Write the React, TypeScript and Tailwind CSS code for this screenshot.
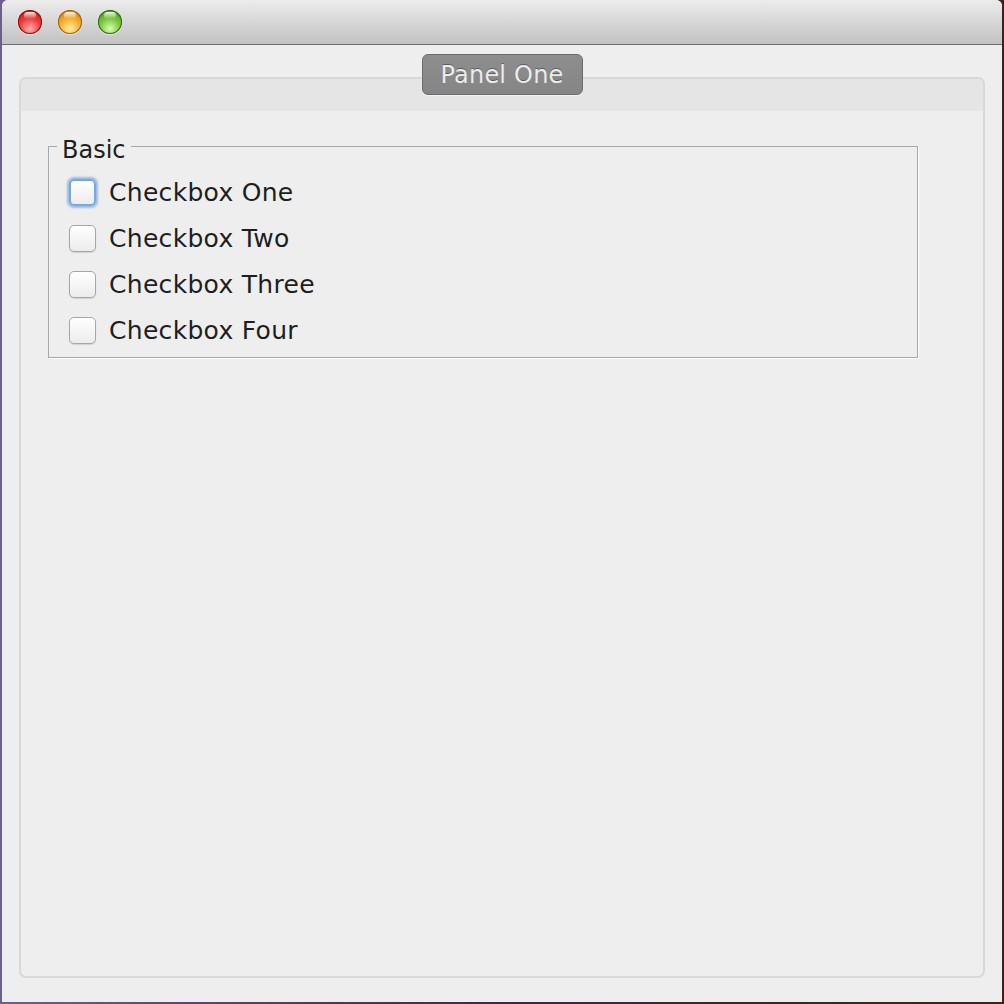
import React from "react";

function Light({ from, mid, to, ring }: { from: string; mid: string; to: string; ring: string }) {
  return (
    <div
      className="w-[24px] h-[24px] rounded-full relative"
      style={{
        background: `radial-gradient(circle at 50% 78%, ${from} 0%, ${mid} 45%, ${to} 100%)`,
        boxShadow: `inset 0 0 0 1px ${ring}, 0 1px 1px rgba(255,255,255,0.6)`,
      }}
    >
      <div className="absolute left-[6px] top-[2px] w-[12px] h-[7px] rounded-full bg-gradient-to-b from-white/90 to-white/0" />
    </div>
  );
}

function Check({ label, focused }: { label: string; focused?: boolean }) {
  return (
    <div className="flex items-center h-[46px]">
      <div
        className={
          "w-[27px] h-[27px] rounded-[5px] bg-gradient-to-b from-[#ffffff] to-[#ececec] " +
          (focused
            ? "border-2 border-[#78a8e0] shadow-[0_0_2px_2px_rgba(120,168,224,0.7)]"
            : "border border-[#a6a6a6] shadow-[0_1px_1px_rgba(0,0,0,0.12)]")
        }
      />
      <span className="ml-[13px] text-[25px] leading-none tracking-[0.3px] text-[#1e1e1e]">{label}</span>
    </div>
  );
}

export default function App() {
  return (
    <div
      className="w-[1004px] h-[1004px] flex px-[2px] pb-[2px] bg-gradient-to-r from-[#6d5e8e] via-[#3a2a40] to-[#3b2412]"
      style={{ fontFamily: '"DejaVu Sans", "Liberation Sans", sans-serif' }}
    >
      <div className="flex-1 flex flex-col bg-[#eeeeee] rounded-t-[6px] overflow-hidden">
        <div className="h-[45px] shrink-0 bg-gradient-to-b from-[#ececec] to-[#c2c2c2] border-b border-[#6e6e6e] flex items-center pl-[16px] gap-[16px] pb-[1px]">
          <Light from="#ffb0b0" mid="#f04040" to="#b01010" ring="#8a1010" />
          <Light from="#fff0a0" mid="#f6b030" to="#c07010" ring="#9a6010" />
          <Light from="#d8ffb0" mid="#7cc840" to="#3a8a10" ring="#2f6a10" />
        </div>
        <div className="flex-1 flex flex-col pt-[9px] px-[17px] pb-[24px]">
          <div className="flex justify-center relative z-10">
            <div className="w-[161px] h-[41px] rounded-[6px] bg-gradient-to-b from-[#8e8e8e] to-[#858585] border border-[#6c6c6c] shadow-[0_1px_1px_rgba(255,255,255,0.6)] flex items-center justify-center text-[24px] tracking-[0.2px] text-[#ececec] [text-shadow:0_-1px_0_rgba(0,0,0,0.35)]">
              Panel One
            </div>
          </div>
          <div className="flex-1 -mt-[18px] border-2 border-[#d8d8d8] rounded-[7px] flex flex-col overflow-hidden">
            <div className="h-[32px] bg-[#e5e5e5] shrink-0" />
            <div className="pl-[27px] pt-[22px]">
              <fieldset className="w-[870px] border border-[#a8a8a8] shadow-[1px_1px_0_#ffffff] pl-[20px] pb-[4px]">
                <legend className="ml-[-12px] px-[5px] text-[24px] leading-[26px] text-[#1e1e1e]">
                  <span className="relative top-[4px]">Basic</span>
                </legend>
                <div className="flex flex-col mt-[10px]">
                  <Check label="Checkbox One" focused />
                  <Check label="Checkbox Two" />
                  <Check label="Checkbox Three" />
                  <Check label="Checkbox Four" />
                </div>
              </fieldset>
            </div>
          </div>
        </div>
      </div>
    </div>
  );
}
